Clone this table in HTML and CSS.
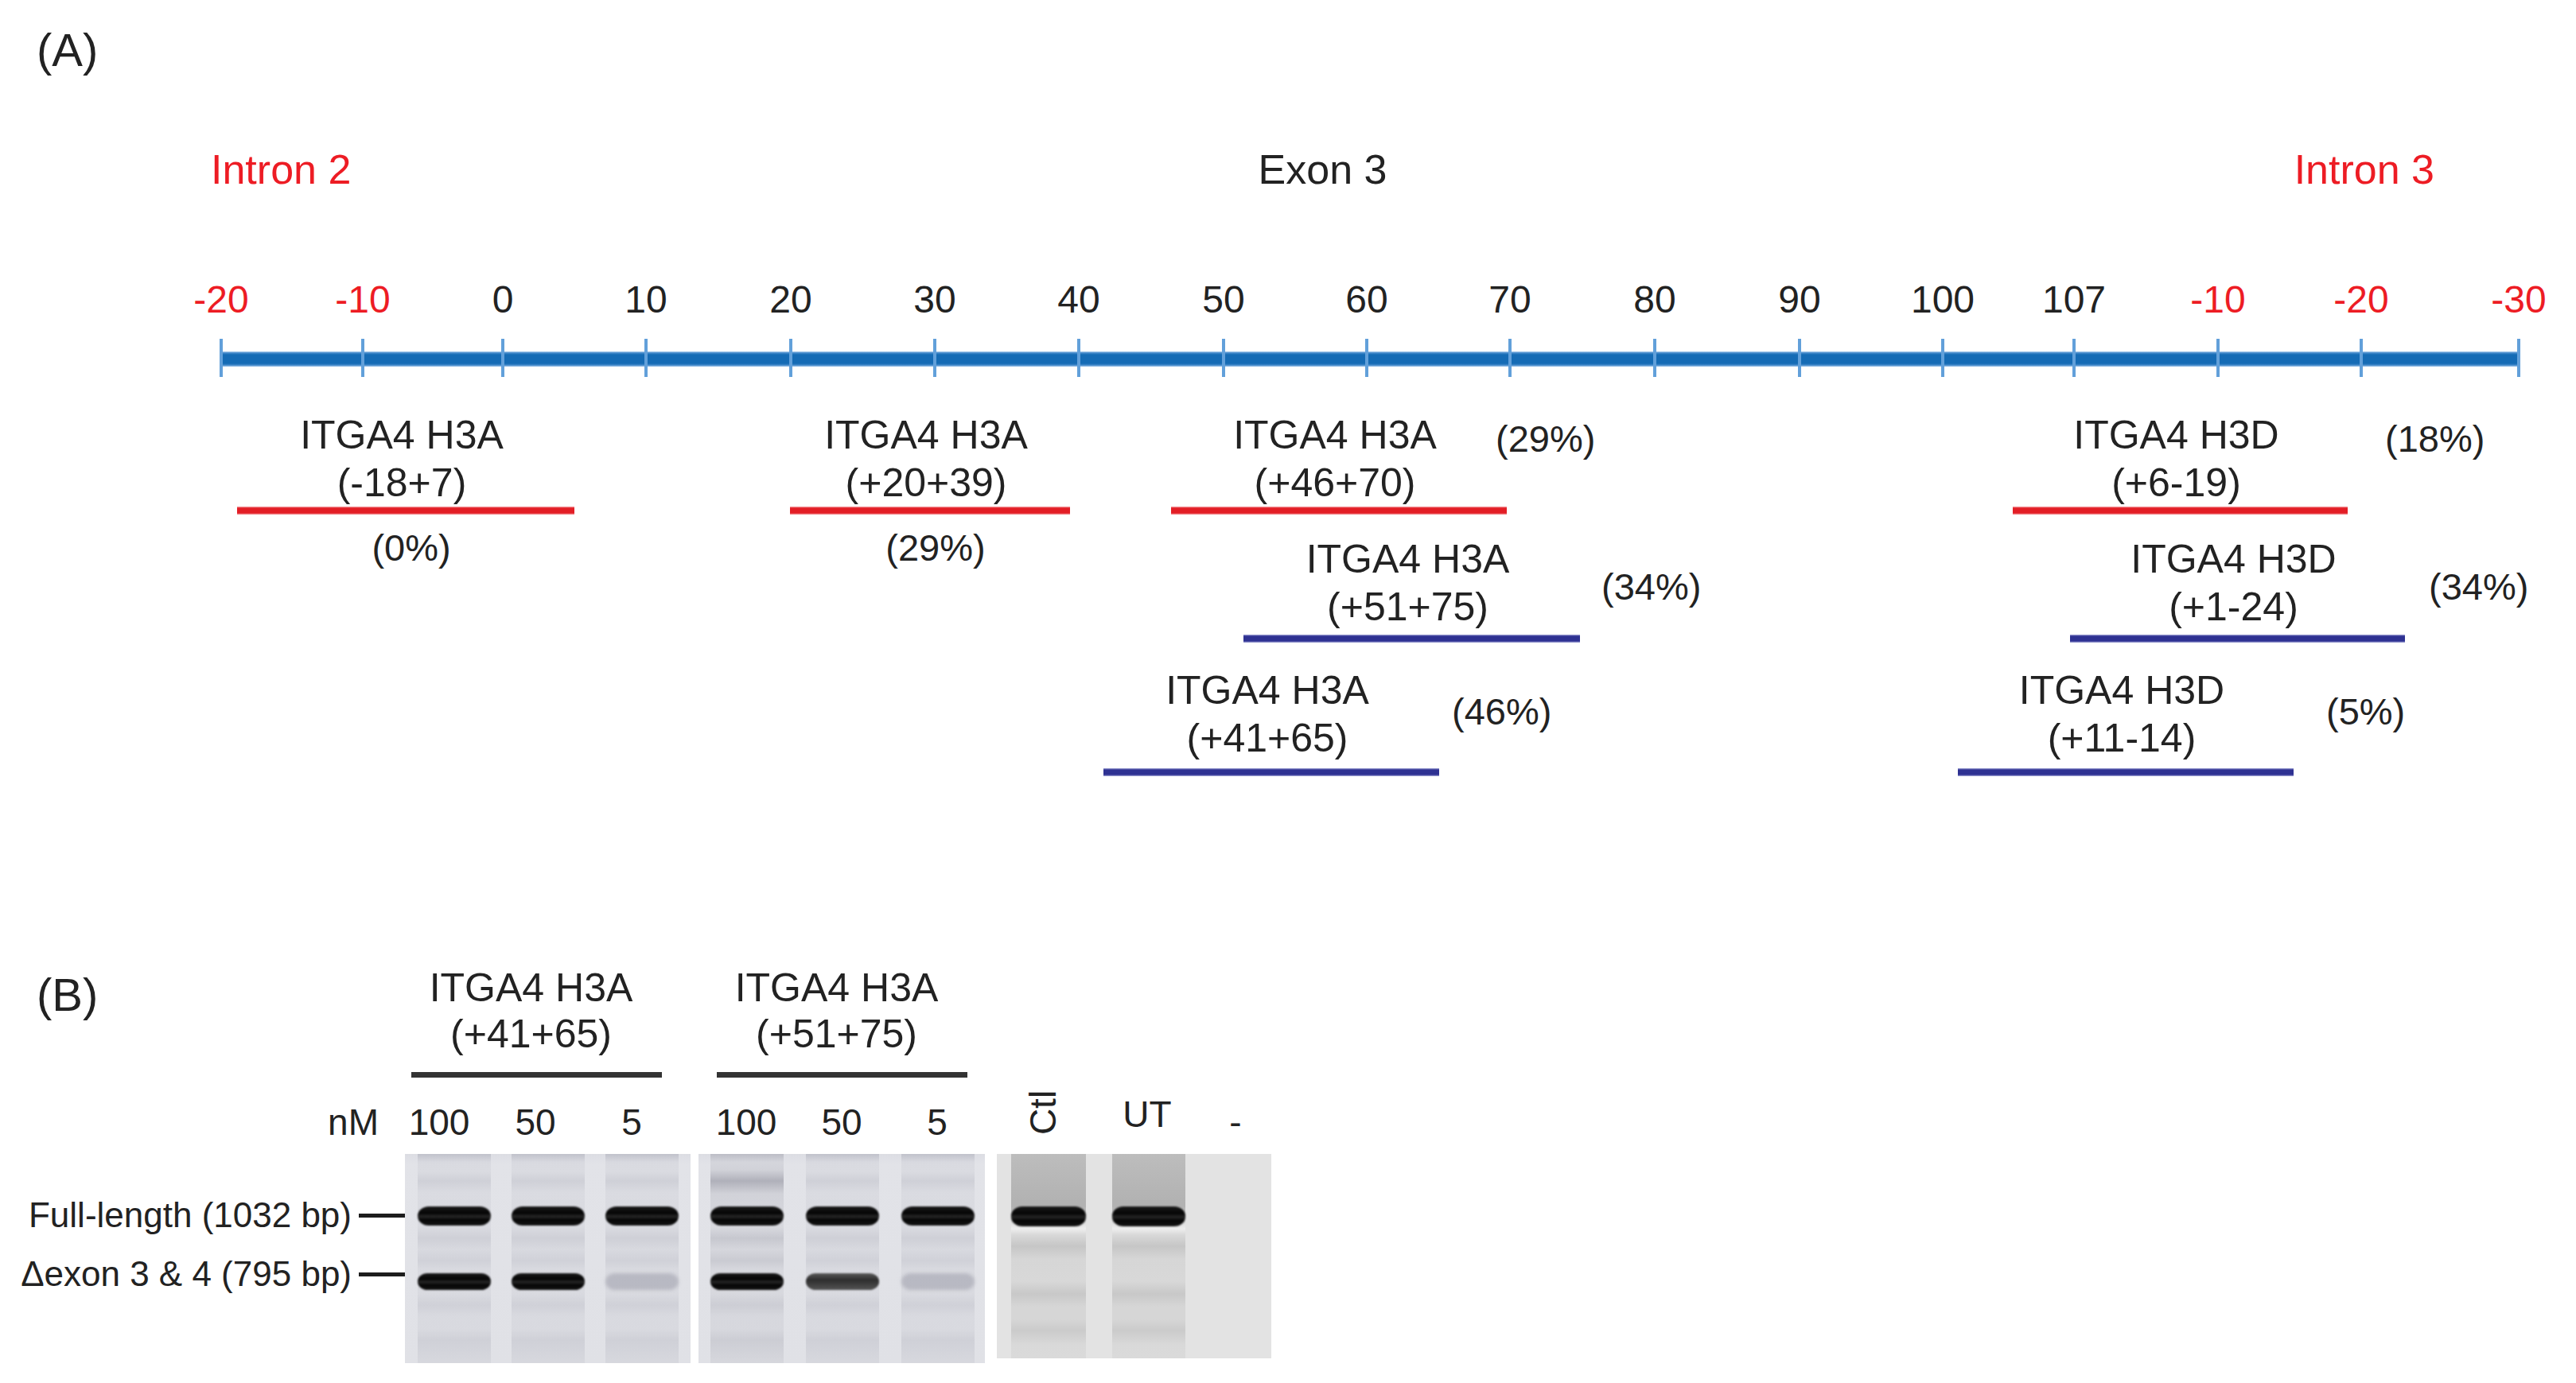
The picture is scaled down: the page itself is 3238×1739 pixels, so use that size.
FILE: index.html
```html
<!DOCTYPE html>
<html lang="en">
<head>
<meta charset="utf-8">
<title>ITGA4 exon 3 skipping</title>
<link rel="stylesheet" href="styles.css">
</head>
<body>
<div class="figure">
  <section class="panel-a">
    <div class="panel-label">(A)</div>
    <div class="regions">
      <span class="red">Intron 2</span>
      <span>Exon 3</span>
      <span class="red">Intron 3</span>
    </div>
    <div class="axis">
      <div class="scale">
        <span class="red" style="left:0px">-20</span>
        <span class="red" style="left:178px">-10</span>
        <span style="left:354px">0</span>
        <span style="left:534px">10</span>
        <span style="left:716px">20</span>
        <span style="left:897px">30</span>
        <span style="left:1078px">40</span>
        <span style="left:1260px">50</span>
        <span style="left:1440px">60</span>
        <span style="left:1620px">70</span>
        <span style="left:1802px">80</span>
        <span style="left:1984px">90</span>
        <span style="left:2164px">100</span>
        <span style="left:2329px">107</span>
        <span class="red" style="left:2510px">-10</span>
        <span class="red" style="left:2690px">-20</span>
        <span class="red" style="left:2888px">-30</span>
      </div>
      <div class="bar">
        <i class="tick" style="left:0px"></i>
        <i class="tick" style="left:178px"></i>
        <i class="tick" style="left:354px"></i>
        <i class="tick" style="left:534px"></i>
        <i class="tick" style="left:716px"></i>
        <i class="tick" style="left:897px"></i>
        <i class="tick" style="left:1078px"></i>
        <i class="tick" style="left:1260px"></i>
        <i class="tick" style="left:1440px"></i>
        <i class="tick" style="left:1620px"></i>
        <i class="tick" style="left:1802px"></i>
        <i class="tick" style="left:1984px"></i>
        <i class="tick" style="left:2164px"></i>
        <i class="tick" style="left:2329px"></i>
        <i class="tick" style="left:2510px"></i>
        <i class="tick" style="left:2690px"></i>
        <i class="tick" style="left:2888px"></i>
      </div>

      <div class="oligo top" style="left:20px; top:170px; width:424px">
        <div class="oligo-name">ITGA4 H3A<br>(-18+7)</div>
        <div class="oligo-bar sense"></div>
        <div class="pct-below">(0%)</div>
      </div>
      <div class="oligo top" style="left:715px; top:170px; width:352px">
        <div class="oligo-name">ITGA4 H3A<br>(+20+39)</div>
        <div class="oligo-bar sense"></div>
        <div class="pct-below">(29%)</div>
      </div>
      <div class="oligo top" style="left:1194px; top:170px; width:422px">
        <div class="oligo-name">ITGA4 H3A<br>(+46+70)</div>
        <div class="oligo-bar sense"></div>
      </div>
      <div class="pct" style="left:1602px; top:175px">(29%)</div>

      <div class="oligo mid" style="left:1285px; top:326px; width:423px">
        <div class="oligo-name">ITGA4 H3A<br>(+51+75)</div>
        <div class="oligo-bar anti"></div>
      </div>
      <div class="pct" style="left:1735px; top:361px">(34%)</div>

      <div class="oligo low" style="left:1109px; top:491px; width:422px">
        <div class="oligo-name">ITGA4 H3A<br>(+41+65)</div>
        <div class="oligo-bar anti"></div>
      </div>
      <div class="pct" style="left:1547px; top:518px">(46%)</div>

      <div class="oligo top" style="left:2252px; top:170px; width:421px">
        <div class="oligo-name">ITGA4 H3D<br>(+6-19)</div>
        <div class="oligo-bar sense"></div>
      </div>
      <div class="pct" style="left:2720px; top:175px">(18%)</div>

      <div class="oligo mid" style="left:2324px; top:326px; width:421px">
        <div class="oligo-name">ITGA4 H3D<br>(+1-24)</div>
        <div class="oligo-bar anti"></div>
      </div>
      <div class="pct" style="left:2775px; top:361px">(34%)</div>

      <div class="oligo low" style="left:2183px; top:491px; width:422px">
        <div class="oligo-name">ITGA4 H3D<br>(+11-14)</div>
        <div class="oligo-bar anti"></div>
      </div>
      <div class="pct" style="left:2646px; top:518px">(5%)</div>
    </div>
  </section>

  <section class="panel-b">
    <div class="b-label">(B)</div>
    <div class="group-title g1">
      <div class="title-text">ITGA4 H3A<br>(+41+65)</div>
      <div class="title-rule"></div>
    </div>
    <div class="group-title g2">
      <div class="title-text">ITGA4 H3A<br>(+51+75)</div>
      <div class="title-rule"></div>
    </div>
    <div></div>

    <div class="unit">nM</div>
    <div class="lane-labels l1">
      <span class="lane-label">100</span>
      <span class="lane-label">50</span>
      <span class="lane-label">5</span>
    </div>
    <div class="lane-labels l2">
      <span class="lane-label">100</span>
      <span class="lane-label">50</span>
      <span class="lane-label">5</span>
    </div>
    <div class="lane-labels l3">
      <span class="lane-label ctl"><span class="rot">Ctl</span></span>
      <span class="lane-label ut">UT</span>
      <span class="lane-label neg">-</span>
    </div>

    <div class="band-labels">
      <div class="band-label">Full-length (1032 bp)<span class="band-tick"></span></div>
      <div class="band-label">Δexon 3 &amp; 4 (795 bp)<span class="band-tick"></span></div>
    </div>
    <div class="gel gel-a gel1">
      <div class="lane lane-top"><div class="band fl"></div><div class="band dx"></div></div>
      <div class="lane"><div class="band fl"></div><div class="band dx"></div></div>
      <div class="lane"><div class="band fl"></div><div class="band dx faint"></div></div>
    </div>
    <div class="gel gel-a gel2">
      <div class="lane lane-strong"><div class="band fl"></div><div class="band dx"></div></div>
      <div class="lane"><div class="band fl"></div><div class="band dx medium"></div></div>
      <div class="lane"><div class="band fl"></div><div class="band dx faint"></div></div>
    </div>
    <div class="gel gel-b gel3">
      <div class="lane loaded wide"><div class="band fl"></div></div>
      <div class="lane loaded"><div class="band fl"></div></div>
      <div class="lane empty"></div>
    </div>
  </section>
</div>
</body>
</html>
```

FILE: styles.css
```css
* { box-sizing: border-box; }

body {
  margin: 0;
  background: #ffffff;
  font-family: "Liberation Sans", Arial, sans-serif;
  color: #222222;
}

.figure {
  width: 3238px;
  height: 1739px;
  overflow: hidden;
}

.red { color: #ed1c24; }

/* ---------- Panel A ---------- */
.panel-a { padding-top: 30px; }

.panel-label {
  font-size: 58px;
  line-height: 66px;
  padding-left: 46px;
}

.regions {
  display: flex;
  justify-content: space-between;
  margin: 87px 0 0 265px;
  width: 2795px;
  font-size: 52px;
  line-height: 60px;
}

.axis {
  position: relative;
  margin: 104px 0 0 278px;
  width: 2900px;
  height: 640px;
}

.scale {
  position: relative;
  height: 60px;
  font-size: 48px;
  line-height: 60px;
}

.scale span {
  position: absolute;
  top: 0;
  transform: translateX(-50%);
  white-space: nowrap;
}

.bar {
  position: relative;
  margin-top: 35px;
  width: 2890px;
  height: 19px;
  background: linear-gradient(to bottom,
    #a6c9ec 0, #3f86c8 2px, #156bb5 4px, #156bb5 15px, #3f86c8 17px, #a6c9ec 19px);
}

.tick {
  position: absolute;
  top: -16px;
  width: 4px;
  height: 48px;
  margin-left: -2px;
  background: #62a0da;
}

.oligo {
  position: absolute;
  display: flex;
  flex-direction: column;
}

.oligo-name {
  font-size: 50px;
  line-height: 60px;
  text-align: center;
  white-space: nowrap;
  padding-right: 10px;
}

.oligo-bar { height: 10px; }
.mid .oligo-bar { margin-top: 5px; }
.low .oligo-bar { margin-top: 8px; }

.oligo-bar.sense {
  background: linear-gradient(to bottom, #f5a5a8 0, #e31d25 2px, #e31d25 8px, #f5a5a8 10px);
}

.oligo-bar.anti {
  background: linear-gradient(to bottom, #abaddb 0, #2e3192 2px, #2e3192 8px, #abaddb 10px);
}

.pct-below {
  font-size: 47px;
  line-height: 60px;
  text-align: center;
  margin-top: 12px;
  padding-left: 14px;
}

.pct {
  position: absolute;
  font-size: 47px;
  line-height: 60px;
  white-space: nowrap;
}

/* ---------- Panel B ---------- */
.panel-b {
  display: grid;
  grid-template-columns: 509px 359px 370px 360px;
  align-items: start;
  margin-top: 226px;
}

.b-label {
  font-size: 58px;
  line-height: 66px;
  padding-left: 46px;
  margin-top: 5px;
}

.group-title { width: 315px; }
.group-title.g1 { margin-left: 8px; }
.group-title.g2 { margin-left: 33px; }

.title-text {
  font-size: 50px;
  line-height: 58px;
  text-align: center;
  padding-right: 14px;
  white-space: nowrap;
}

.title-rule {
  margin-top: 19px;
  height: 7px;
  background: #333333;
}

.unit,
.lane-labels {
  margin-top: 30px;
  height: 52px;
  font-size: 46px;
  line-height: 52px;
}

.unit {
  text-align: right;
  padding-right: 33px;
}

.lane-labels {
  display: flex;
  align-items: center;
}

.lane-label {
  width: 0;
  display: flex;
  justify-content: center;
  white-space: nowrap;
}

.l1 { padding-left: 43px; gap: 121px; }
.l2 { padding-left: 70px; gap: 120px; }
.l3 { padding-left: 73px; }
.l3 .ut { margin-left: 131px; transform: translateY(-10px); }
.l3 .neg { margin-left: 111px; }

.rot {
  display: inline-block;
  transform: translateY(-12px) rotate(-90deg);
}

.band-labels {
  margin-top: 14px;
  padding-top: 51px;
  display: flex;
  flex-direction: column;
  gap: 22px;
}

.band-label {
  display: flex;
  align-items: center;
  justify-content: flex-end;
  height: 52px;
  font-size: 44px;
  white-space: nowrap;
}

.band-tick {
  width: 60px;
  height: 5px;
  margin-left: 9px;
  margin-right: -2px;
  background: #1c1c1c;
}

.gel {
  margin-top: 14px;
  height: 263px;
  display: flex;
}

.gel1 { width: 359px; padding-left: 16px; gap: 26px; }
.gel2 { width: 360px; margin-left: 10px; padding-left: 15px; gap: 28px; }
.gel3 { width: 345px; margin-left: 15px; height: 257px; padding-left: 18px; gap: 33px; }

.gel-a {
  background: linear-gradient(to bottom, #dcdde3 0, #e2e3e8 12px, #e0e1e6 100%);
}

.gel-b {
  background: #e3e3e3;
}

.lane {
  width: 92px;
  height: 100%;
  display: flex;
  flex-direction: column;
}

.lane.wide { width: 94px; }

.gel-a .lane {
  background: linear-gradient(to bottom,
    rgba(70,72,95,.18) 0, rgba(70,72,95,.06) 10px,
    rgba(70,72,95,.05) 22px, rgba(70,72,95,.12) 34px, rgba(70,72,95,.05) 48px,
    rgba(70,72,95,.05) 92px, rgba(70,72,95,.12) 106px, rgba(70,72,95,.06) 120px,
    rgba(70,72,95,.11) 134px, rgba(70,72,95,.05) 146px,
    rgba(70,72,95,.05) 176px, rgba(70,72,95,.11) 190px, rgba(70,72,95,.05) 204px,
    rgba(70,72,95,.05) 220px, rgba(70,72,95,.11) 234px, rgba(70,72,95,.06) 263px);
}

.gel-a .lane.lane-strong {
  background: linear-gradient(to bottom,
    rgba(60,60,80,.20) 0, rgba(60,60,80,.08) 10px,
    rgba(60,60,80,.10) 20px, rgba(60,60,80,.30) 34px, rgba(60,60,80,.10) 50px,
    rgba(60,60,80,.06) 92px, rgba(60,60,80,.16) 106px, rgba(60,60,80,.07) 120px,
    rgba(60,60,80,.14) 134px, rgba(60,60,80,.06) 146px,
    rgba(60,60,80,.06) 176px, rgba(60,60,80,.12) 190px, rgba(60,60,80,.06) 204px,
    rgba(60,60,80,.06) 220px, rgba(60,60,80,.12) 234px, rgba(60,60,80,.06) 263px);
}

.gel-b .lane.loaded {
  background: linear-gradient(to bottom,
    #bdbdbd 0, #b2b2b2 60px, #b2b2b2 66px,
    #eeeeee 94px, #d8d8d8 102px, #c6c6c6 116px, #d6d6d6 132px,
    #d8d8d8 160px, #c8c8c8 176px, #d6d6d6 192px,
    #d6d6d6 208px, #cbcbcb 222px, #d9d9d9 240px, #dadada 257px);
}

.gel-b .lane.empty { width: 70px; }

.band {
  width: 100%;
  border-radius: 14px / 12px;
  background: linear-gradient(to bottom, #1b1b1b 0, #050505 35%, #262626 52%, #050505 72%, #161616 100%);
  filter: blur(1.2px);
}

.band.fl { margin-top: 66px; height: 24px; }
.band.dx { margin-top: 60px; height: 21px; }

.gel3 .band.fl { height: 25px; }

.band.medium {
  background: linear-gradient(to bottom, #5a5a5a 0, #2e2e2e 40%, #3a3a3a 60%, #555555 100%);
}

.band.faint {
  background: rgba(70,70,90,.22);
  filter: blur(2px);
}
```
